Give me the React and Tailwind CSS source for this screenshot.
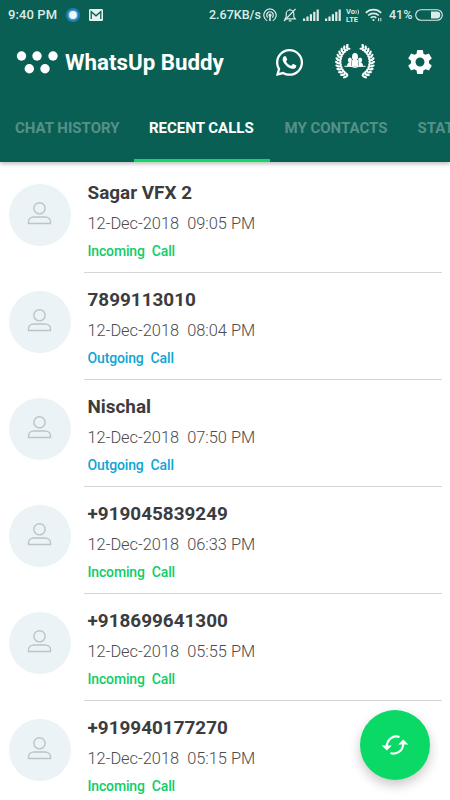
import { FaWhatsapp } from "react-icons/fa";
import { MdSettings } from "react-icons/md";

const calls = [
  { name: "Sagar VFX 2", date: "12-Dec-2018", time: "09:05 PM", type: "Incoming" },
  { name: "7899113010", date: "12-Dec-2018", time: "08:04 PM", type: "Outgoing" },
  { name: "Nischal", date: "12-Dec-2018", time: "07:50 PM", type: "Outgoing" },
  { name: "+919045839249", date: "12-Dec-2018", time: "06:33 PM", type: "Incoming" },
  { name: "+918699641300", date: "12-Dec-2018", time: "05:55 PM", type: "Incoming" },
  { name: "+919940177270", date: "12-Dec-2018", time: "05:15 PM", type: "Incoming" },
];

const tabs = [
  { label: "CHAT HISTORY", width: "w-[134px]" },
  { label: "RECENT CALLS", width: "w-[135.5px]", active: true },
  { label: "MY CONTACTS", width: "w-[133px]" },
  { label: "STATUS", width: "w-[92px]" },
];

const leafAngles = [-64, -53, -42, -31, -20, -9, 2, 13, 24, 35, 46, 57];

function Signal({ className }) {
  return (
    <svg viewBox="0 0 17 12" className={`h-3 w-[17px] shrink-0 ${className}`} fill="currentColor">
      <rect x="0" y="9.5" width="2.2" height="2.5" />
      <rect x="3.4" y="7.5" width="2.2" height="4.5" />
      <rect x="6.8" y="5.2" width="2.2" height="6.8" />
      <rect x="10.2" y="2.8" width="2.2" height="9.2" />
      <rect x="13.6" y="0.5" width="2.2" height="11.5" />
    </svg>
  );
}

function StatusBar() {
  return (
    <div className="flex h-[30px] items-center pl-2 text-[13px] font-medium text-[#dcebe8]">
      <span className="w-[57px] shrink-0 whitespace-nowrap tracking-[0.1px]">9:40 PM</span>
      <svg viewBox="0 0 16 16" className="h-4 w-4 shrink-0">
        <circle cx="8" cy="8" r="7.3" fill="#1c76a5" />
        <circle cx="8" cy="8" r="5.5" fill="#459cce" />
        <circle cx="8" cy="8" r="3.9" fill="#eefaff" />
      </svg>
      <svg viewBox="0 0 14 12" className="ml-2 h-3 w-3.5 shrink-0">
        <rect width="14" height="12" rx="1.2" fill="#e6f3f0" />
        <path d="M2.2 10V2.7L7 6.8l4.8-4.1V10" fill="none" stroke="#095f54" strokeWidth="1.3" />
      </svg>
      <span className="ml-[106px] w-[54px] shrink-0 text-[12.5px] whitespace-nowrap">2.67KB/s</span>
      <svg viewBox="0 0 14 14" className="h-3.5 w-3.5 shrink-0" fill="none" stroke="currentColor" strokeWidth="1.2">
        <path d="M4.2 12.7a6.2 6.2 0 1 1 5.6 0" />
        <path d="M4.8 9.5a3.3 3.3 0 1 1 4.4 0" />
        <circle cx="7" cy="7" r="1" fill="currentColor" />
        <path d="M7 7v6" strokeWidth="1.6" />
      </svg>
      <svg viewBox="0 0 14 14" className="ml-1.5 h-3.5 w-3.5 shrink-0" fill="none" stroke="currentColor" strokeWidth="1.15">
        <path d="M2 10.8h10.3l-1.5-1.9V5.8a3.8 3.8 0 0 0-7.6 0v3.1zM5.8 12.8h2.6M7 2V.8" />
        <path d="M1 13 12.5 1" />
      </svg>
      <Signal className="ml-1.5" />
      <Signal className="ml-[5px]" />
      <span className="mt-px ml-1 flex w-[15px] shrink-0 flex-col text-[7.5px] leading-[7.5px] font-bold">
        <span className="flex items-center">
          Vo
          <svg viewBox="0 0 5 6" className="h-1.5 w-[5px]" fill="none" stroke="currentColor" strokeWidth="0.9">
            <path d="M.8 1.2q1.2 1.8 0 3.6M2.8.5q1.8 2.5 0 5" />
          </svg>
        </span>
        <span>LTE</span>
      </span>
      <svg viewBox="0 0 18 14" className="ml-1 h-3.5 w-[18px] shrink-0" fill="none" stroke="currentColor" strokeWidth="1.7">
        <path d="M.8 4.8a11 11 0 0 1 15.4 0M3.2 7.5a7.6 7.6 0 0 1 10.6 0M5.7 10a4 4 0 0 1 5.6 0" />
        <circle cx="8.5" cy="12" r="1.1" fill="currentColor" stroke="none" />
        <path d="M13.6 10v3.3M15.8 10v3.3" strokeWidth="1" />
      </svg>
      <span className="ml-1.5 w-[26px] shrink-0 text-[12.5px]">41%</span>
      <svg viewBox="0 0 28 12" className="h-3 w-7 shrink-0">
        <rect x=".7" y=".7" width="26.6" height="10.6" rx="5.3" fill="none" stroke="currentColor" strokeWidth="1.1" />
        <path d="M16 2.6h5.9a3.4 3.4 0 0 1 0 6.8H16z" fill="currentColor" />
      </svg>
    </div>
  );
}

function Wreath() {
  const side = leafAngles.map((a) => (
    <g key={a} transform={`rotate(${-a} 20 18)`}>
      <ellipse cx="2.2" cy="18" rx="2.5" ry="1.2" transform="rotate(38 2.2 18)" />
      <ellipse cx="5.2" cy="18" rx="2.1" ry="1.1" transform="rotate(-60 5.2 18)" />
    </g>
  ));
  return (
    <svg viewBox="0 0 40 36" className="h-9 w-10 shrink-0" fill="white">
      <g>{side}</g>
      <g transform="translate(40 0) scale(-1 1)">{side}</g>
      {/* people inside the laurel */}
      <ellipse cx="20" cy="12.8" rx="3" ry="3.8" />
      <path d="M16.7 22.8v-5q0-2 2-2.5h2.6q2 .5 2 2.5v5z" />
      <ellipse cx="14.9" cy="16" rx="2" ry="2.6" />
      <ellipse cx="25.1" cy="16" rx="2" ry="2.6" />
      <path d="M12 22.3q.3-3.8 2.8-4.3h1.5v4.8zM28 22.3q-.3-3.8-2.8-4.3h-1.5v4.8z" />
      <path d="M9.5 22.3h6q4.5 2.4 9 0h6" fill="none" stroke="white" strokeWidth="1" />
    </svg>
  );
}

function Toolbar() {
  return (
    <div className="flex h-16 items-center pl-4 text-white">
      <svg viewBox="0 0 42 24" className="h-6 w-[42px] shrink-0" fill="currentColor">
        <circle cx="5.5" cy="6" r="4.7" />
        <circle cx="21" cy="6" r="4.7" />
        <circle cx="37" cy="6" r="4.7" />
        <circle cx="13.3" cy="18.7" r="4.7" />
        <circle cx="29" cy="18.7" r="4.7" />
      </svg>
      <h1 className="ml-[7px] w-[209px] shrink-0 pt-0.5 text-[22.3px] font-bold whitespace-nowrap">
        WhatsUp Buddy
      </h1>
      <FaWhatsapp className="h-[31px] w-[31px] shrink-0" />
      <div className="ml-[30px] shrink-0">
        <Wreath />
      </div>
      <MdSettings className="ml-[30px] h-[30px] w-[30px] shrink-0" />
    </div>
  );
}

function Tabs() {
  return (
    <nav className="flex h-[68px] overflow-hidden text-[15px] font-bold">
      {tabs.map((tab) => (
        <button
          key={tab.label}
          className={`flex shrink-0 items-center border-b-[3px] pt-1 pl-[15px] ${tab.width} ${
            tab.active ? "border-[#12d866] text-white" : "border-transparent text-[#559188]"
          }`}
        >
          <span className="whitespace-nowrap">{tab.label}</span>
        </button>
      ))}
    </nav>
  );
}

function CallRow({ call }) {
  return (
    <li className="flex h-[107px] pr-2 pl-[9px]">
      <div className="mt-[18px] mr-[13px] flex h-[62px] w-[62px] shrink-0 items-center justify-center rounded-full bg-[#ebf3f7]">
        <svg viewBox="0 0 26 26" className="h-[26px] w-[26px]" fill="none" stroke="#bcc4c7" strokeWidth="1.4">
          <circle cx="12.5" cy="6.3" r="5.6" />
          <path d="M1.5 21.5V20c0-3 2.5-5 5.5-5h11c3 0 5.5 2 5.5 5v1.5z" />
        </svg>
      </div>
      <div className="flex flex-1 flex-col border-b border-[#d6d6d6] pt-3.5 pl-[3.5px]">
        <h2 className="text-[18.9px] leading-[26px] font-bold text-[#3b3c3e]">{call.name}</h2>
        <p className="mt-[7px] flex gap-2 text-[16.4px] leading-[22px] font-light text-[#4b4b4b]">
          <span>{call.date}</span>
          <span>{call.time}</span>
        </p>
        <p
          className={`mt-1.5 flex gap-[7px] text-[14px] leading-5 font-medium tracking-[-0.15px] ${
            call.type === "Incoming" ? "text-[#0fcd69]" : "text-[#0da5d5]"
          }`}
        >
          <span>{call.type}</span>
          <span>Call</span>
        </p>
      </div>
    </li>
  );
}

export default function App() {
  return (
    <div className="relative flex h-[800px] w-[450px] flex-col overflow-hidden bg-white font-['Roboto',sans-serif]">
      <header className="z-10 h-[162px] shrink-0 bg-[#095f54] shadow-[0_2px_4px_rgba(0,0,0,0.25)]">
        <StatusBar />
        <Toolbar />
        <Tabs />
      </header>
      <ul className="pt-1">
        {calls.map((call) => (
          <CallRow key={call.name} call={call} />
        ))}
      </ul>
      <button className="absolute right-5 bottom-5 flex h-[70px] w-[70px] items-center justify-center rounded-full bg-[#0bd965] shadow-[0_5px_12px_rgba(0,0,0,0.22)]">
        <svg viewBox="0 0 28 22" className="h-[22px] w-7" fill="none" stroke="white" strokeWidth="2.2">
          <path d="M5.8 12.5C5.8 5.5 12 .8 18.5 3" />
          <path d="M22.2 9.5C22.2 16.5 16 21.2 9.5 19" />
          <path d="M.7 11.5h10.2L5.8 16.5zM17.1 10.5h10.2L22.2 5.5z" fill="white" stroke="none" />
        </svg>
      </button>
    </div>
  );
}
